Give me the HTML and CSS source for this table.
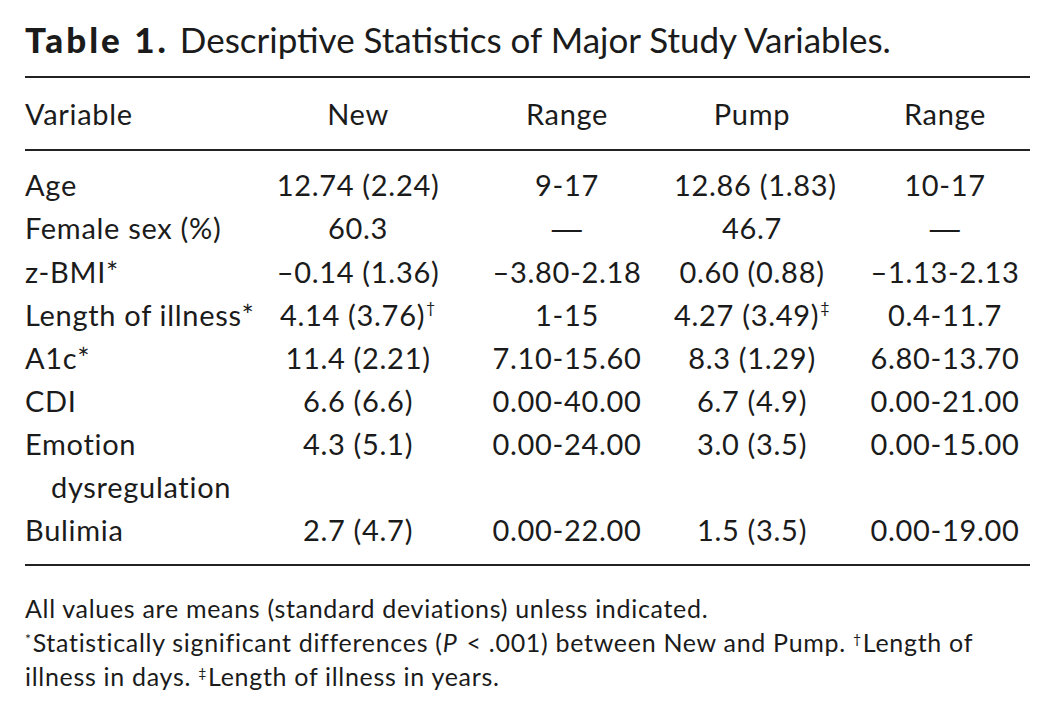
FILE: index.html
```html
<!DOCTYPE html>
<html>
<head>
<meta charset="utf-8">
<link rel="stylesheet" href="styles.css">
</head>
<body>
<div class="page">
  <h1 class="title"><span class="label">Table 1.</span> Descriptive Statistics of Major Study Variables.</h1>
  <table class="stats">
    <colgroup>
      <col class="c1"><col class="c2"><col class="c3"><col class="c4"><col class="c5">
    </colgroup>
    <thead>
      <tr>
        <th class="var">Variable</th>
        <th class="n">New</th>
        <th class="r1">Range</th>
        <th class="p">Pump</th>
        <th class="r2">Range</th>
      </tr>
    </thead>
    <tbody>
      <tr class="first">
        <td class="var">Age</td><td class="n">12.74 (2.24)</td><td class="r1">9-17</td><td class="p">12.86 (1.83)</td><td class="r2">10-17</td>
      </tr>
      <tr>
        <td class="var">Female sex (%)</td><td class="n">60.3</td><td class="r1"><span class="dash">—</span></td><td class="p">46.7</td><td class="r2"><span class="dash">—</span></td>
      </tr>
      <tr>
        <td class="var">z-BMI*</td><td class="n">–0.14 (1.36)</td><td class="r1">–3.80-2.18</td><td class="p">0.60 (0.88)</td><td class="r2">–1.13-2.13</td>
      </tr>
      <tr>
        <td class="var">Length of illness*</td><td class="n">4.14 (3.76)<sup>†</sup></td><td class="r1">1-15</td><td class="p">4.27 (3.49)<sup>‡</sup></td><td class="r2">0.4-11.7</td>
      </tr>
      <tr>
        <td class="var">A1c*</td><td class="n">11.4 (2.21)</td><td class="r1">7.10-15.60</td><td class="p">8.3 (1.29)</td><td class="r2">6.80-13.70</td>
      </tr>
      <tr>
        <td class="var">CDI</td><td class="n">6.6 (6.6)</td><td class="r1">0.00-40.00</td><td class="p">6.7 (4.9)</td><td class="r2">0.00-21.00</td>
      </tr>
      <tr>
        <td class="var">Emotion dysregulation</td><td class="n">4.3 (5.1)</td><td class="r1">0.00-24.00</td><td class="p">3.0 (3.5)</td><td class="r2">0.00-15.00</td>
      </tr>
      <tr class="last">
        <td class="var">Bulimia</td><td class="n">2.7 (4.7)</td><td class="r1">0.00-22.00</td><td class="p">1.5 (3.5)</td><td class="r2">0.00-19.00</td>
      </tr>
    </tbody>
  </table>
  <div class="notes">
    <p>All values are means (standard deviations) unless indicated.</p>
    <p><sup>*</sup>Statistically significant differences (<i>P</i> &lt; .001) between New and Pump. <sup>†</sup>Length of<br>illness in days. <sup>‡</sup>Length of illness in years.</p>
  </div>
</div>
</body>
</html>
```
FILE: styles.css
```css
html, body {
  margin: 0;
  padding: 0;
  background: #ffffff;
}
body {
  font-family: "Lato", "Open Sans", "Liberation Sans", sans-serif;
  color: #1b1b1b;
}
.page {
  padding: 16px 28px 0 25px;
  width: 1005px;
}
.title {
  margin: 0;
  font-size: 35px;
  font-weight: 400;
  line-height: 46px;
  height: 60px;
}
.title .label {
  font-weight: 900;
  letter-spacing: 3px;
  margin-right: 2px;
}
.stats {
  width: 1005px;
  border-collapse: collapse;
  table-layout: fixed;
  font-size: 29px;
  letter-spacing: 0.7px;
  line-height: 43px;
  border-top: 2px solid #222;
  border-bottom: 2px solid #222;
}
.c1 { width: 243px; }
.c2 { width: 197px; }
.c3 { width: 198px; }
.c4 { width: 182px; }
.c5 { width: 185px; }
.stats td, .stats th {
  padding: 0;
  vertical-align: top;
  text-align: center;
  white-space: nowrap;
}
.stats th {
  font-weight: 400;
  padding-top: 14px;
  padding-bottom: 14px;
  border-bottom: 2px solid #222;
}
.stats .var {
  text-align: left;
  padding-left: 26px;
  text-indent: -26px;
  white-space: normal;
}
.stats th.var { padding-left: 0; text-indent: 0; }
.stats .n { padding-right: 17px; }
.stats .r1 { padding-left: 17px; padding-right: 11px; }
.stats .p { padding-left: 11px; padding-right: 15px; }
.stats .r2 { padding-left: 15px; }
.stats tr.first td { padding-top: 12px; }
.stats tr.last td { padding-bottom: 13px; }
.stats .dash {
  font-family: "Liberation Sans", sans-serif;
  font-size: 30px;
}
.stats sup {
  font-size: 16px;
  line-height: 0;
  vertical-align: 13px;
  margin-left: 1px;
}
.notes {
  margin-top: 25px;
  font-size: 25px;
  letter-spacing: 0.7px;
  line-height: 34px;
  width: 1000px;
}
.notes p { margin: 0; }
.notes sup {
  font-size: 14px;
  line-height: 1;
  vertical-align: 8px;
  margin-right: 1px;
}
.notes i {
  margin-right: 2px;
}
```
